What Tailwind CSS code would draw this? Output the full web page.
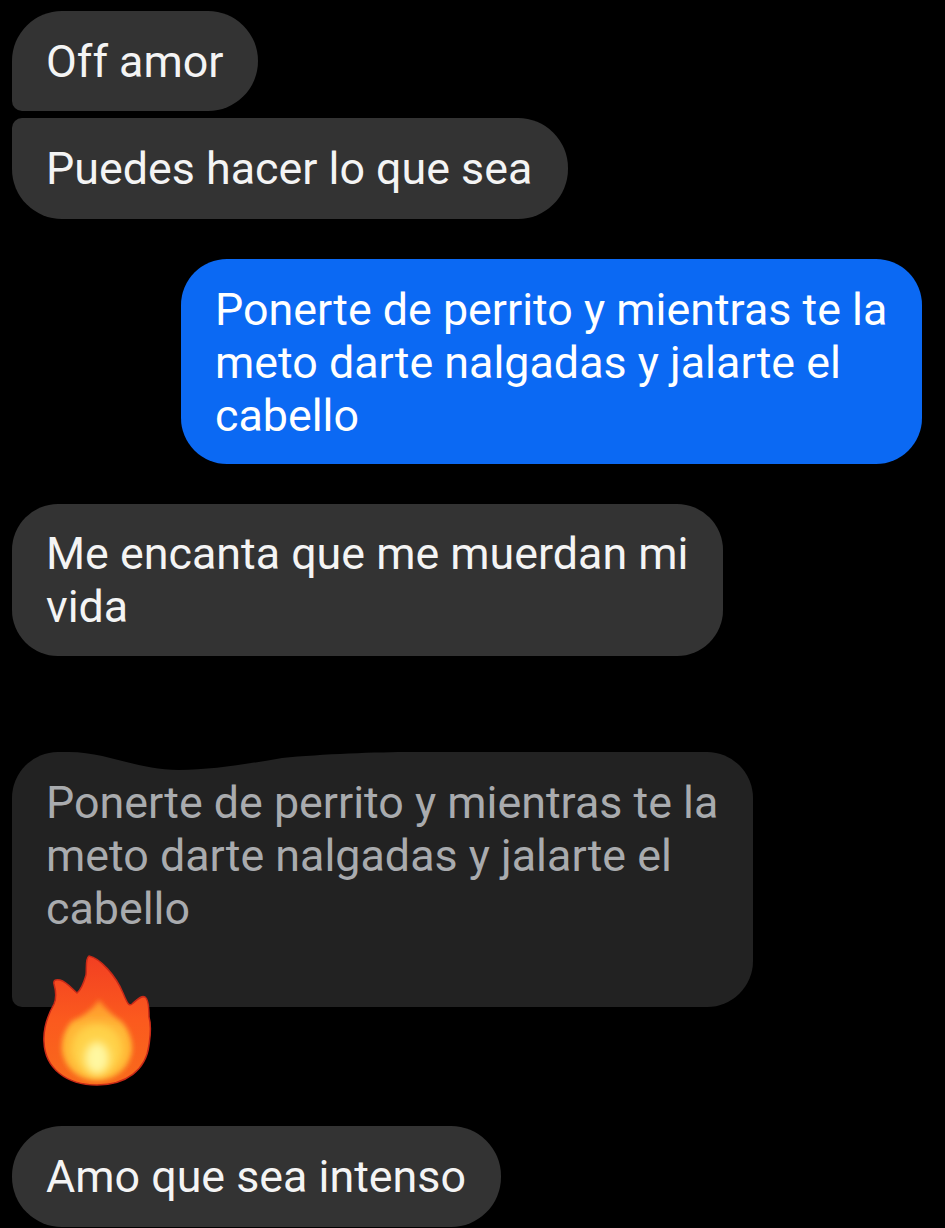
<!DOCTYPE html>
<html lang="es">
<head>
<meta charset="utf-8">
<title>Chat</title>
<script src="https://cdn.jsdelivr.net/npm/@tailwindcss/browser@4"></script>
</head>
<body class="bg-black">
<main class="flex h-[1228px] w-[945px] flex-col overflow-hidden bg-black pl-[12px] pr-[23px] pt-[11px] font-['Roboto',sans-serif] text-[44.8px] leading-[53px] text-[#f4f4f4]">
  <div class="h-[100px] w-[246px] rounded-[50px] rounded-bl-[10px] bg-[#333333] pl-[34px] pt-[24px]">Off amor</div>
  <div class="mt-[7px] h-[101px] w-[556px] rounded-[50px] rounded-tl-[10px] bg-[#333333] pl-[34px] pt-[24px]">Puedes hacer lo que sea</div>

  <div class="mt-[40px] h-[205px] w-[741px] self-end rounded-[46px] bg-[#0b69f3] pl-[34px] pt-[24px] text-white">
    Ponerte de perrito y mientras te la<br>meto darte nalgadas y jalarte el<br>cabello
  </div>

  <div class="mt-[40px] h-[152px] w-[711px] rounded-[46px] bg-[#333333] pl-[34px] pt-[23px]">
    Me encanta que me muerdan mi<br>vida
  </div>

  <div class="relative mt-[96px] h-[255px] w-[741px] rounded-[46px] rounded-bl-[10px] bg-[#222222] pl-[34px] pt-[24px] text-[#a9abae]">
    Ponerte de perrito y mientras te la<br>meto darte nalgadas y jalarte el<br>cabello
    <!-- scribbled out edge on top of the quoted bubble -->
    <svg class="absolute left-0 top-[-6px] h-[30px] w-[420px]" viewBox="0 0 420 30">
      <path d="M30 0H400V6C365 6 310 8 270 12C235 18 200 24 167 24C125 24 95 6 57 6L30 6Z" fill="#000"/>
    </svg>
    <!-- fire emoji -->
    <svg class="absolute left-[30px] top-[203px] h-[132px] w-[110px]" viewBox="0 0 110 132">
      <defs>
        <linearGradient id="outer" x1="0" y1="0" x2="0" y2="1">
          <stop offset="0" stop-color="#f23f22"/>
          <stop offset="0.5" stop-color="#fb5a1e"/>
          <stop offset="1" stop-color="#f86a1c"/>
        </linearGradient>
        <linearGradient id="inner" x1="0" y1="0" x2="0" y2="1">
          <stop offset="0" stop-color="#ff8f28"/>
          <stop offset="0.35" stop-color="#ffb535"/>
          <stop offset="1" stop-color="#ffb02f"/>
        </linearGradient>
        <filter id="soft" x="-20%" y="-20%" width="140%" height="140%"><feGaussianBlur stdDeviation="2.5"/></filter>
        <filter id="softer" x="-60%" y="-60%" width="220%" height="220%"><feGaussianBlur stdDeviation="4"/></filter>
      </defs>
      <path d="M47 1C58 3 74 21 81 38C86 50 87 51 90 49C95 45 99 40 103 42C106 44 107 52 107 62C110 72 108 82 107 90C104 115 84 130 55 130C24 130 3 113 2 87C1 72 7 58 12 49C15 42 14 36 12 29C11 25 14 24 18 25C25 27 30 34 35 38C39 35 42 27 44 20C45 13 43 4 47 1Z" fill="url(#outer)" stroke="#c92a18" stroke-width="1.5"/>
      <path d="M57 45C64 54 70 60 79 66C87 74 91 86 90 96C87 114 73 125 55 125C37 125 23 114 20 96C19 84 23 74 30 66C40 62 50 55 57 45Z" fill="url(#inner)" filter="url(#soft)"/>
      <ellipse cx="55" cy="95" rx="26" ry="26" fill="#ffd24a" filter="url(#softer)"/>
      <ellipse cx="55" cy="103" rx="12" ry="16" fill="#fff7a0" filter="url(#softer)"/>
    </svg>
  </div>

  <div class="mt-[119px] h-[101px] w-[489px] rounded-[50px] bg-[#333333] pl-[34px] pt-[24px]">Amo que sea intenso</div>
</main>
</body>
</html>
